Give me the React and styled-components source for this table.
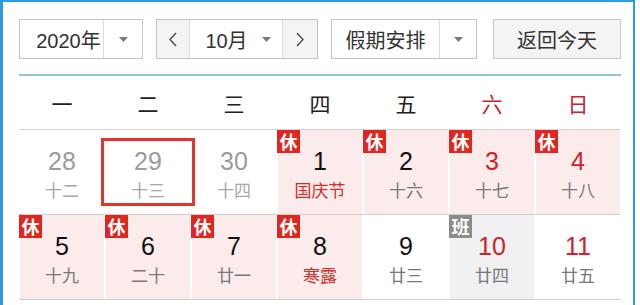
import React from "react"
import styled, { createGlobalStyle } from "styled-components"

const weekdays = ["一", "二", "三", "四", "五", "六", "日"]

const weeks = [
  [
    { day: 28, sub: "十二", other: true },
    { day: 29, sub: "十三", other: true, selected: true },
    { day: 30, sub: "十四", other: true },
    { day: 1, sub: "国庆节", tag: "rest", festival: true },
    { day: 2, sub: "十六", tag: "rest" },
    { day: 3, sub: "十七", tag: "rest" },
    { day: 4, sub: "十八", tag: "rest" },
  ],
  [
    { day: 5, sub: "十九", tag: "rest" },
    { day: 6, sub: "二十", tag: "rest" },
    { day: 7, sub: "廿一", tag: "rest" },
    { day: 8, sub: "寒露", tag: "rest", festival: true },
    { day: 9, sub: "廿三" },
    { day: 10, sub: "廿四", tag: "work" },
    { day: 11, sub: "廿五" },
  ],
]

function Arrow() {
  return (
    <svg width="9" height="5" viewBox="0 0 9 5">
      <polygon points="0,0 9,0 4.5,5" fill="#7a7a7a" />
    </svg>
  )
}

function Chevron({ dir }) {
  const pts = dir === "left" ? "8,1 2,7.5 8,14" : "2,1 8,7.5 2,14"
  return (
    <svg width="10" height="15" viewBox="0 0 10 15">
      <polyline points={pts} fill="none" stroke="#444" strokeWidth="1.3" />
    </svg>
  )
}

function App() {
  return (
    <>
      <GlobalStyle />
      <Frame>
        <Toolbar>
          <SelectBox $width={124}>
            <SelectLabel $pad={14}>2020年</SelectLabel>
            <ArrowPart $width={38}>
              <Arrow />
            </ArrowPart>
          </SelectBox>
          <MonthGroup>
            <NavButton $side="left">
              <Chevron dir="left" />
            </NavButton>
            <MonthPart>
              <span>10月</span>
              <Arrow />
            </MonthPart>
            <NavButton $side="right">
              <Chevron dir="right" />
            </NavButton>
          </MonthGroup>
          <SelectBox $width={146}>
            <SelectLabel $pad={0}>假期安排</SelectLabel>
            <ArrowPart $width={36}>
              <Arrow />
            </ArrowPart>
          </SelectBox>
          <TodayButton>返回今天</TodayButton>
        </Toolbar>
        <Divider />
        <WeekHeader>
          {weekdays.map((w, i) => (
            <WeekName key={w} $weekend={i > 4}>
              {w}
            </WeekName>
          ))}
        </WeekHeader>
        {weeks.map((week, r) => (
          <Week key={r}>
            {week.map((d, i) => (
              <Cell key={d.day} $tag={d.tag}>
                {d.tag === "rest" && <Badge>休</Badge>}
                {d.tag === "work" && <Badge $work>班</Badge>}
                <Num $other={d.other} $weekend={i > 4}>
                  {d.day}
                </Num>
                <Lunar $other={d.other} $festival={d.festival}>
                  {d.sub}
                </Lunar>
                {d.selected && <Selected />}
              </Cell>
            ))}
          </Week>
        ))}
      </Frame>
    </>
  )
}

export default App

const GlobalStyle = createGlobalStyle`
  body {
    margin: 0;
    background: #fff;
    font-family: "Liberation Sans", "Noto Sans CJK SC", sans-serif;
  }
`
const Frame = styled.div`
  width: 635px;
  height: 305px;
  box-sizing: border-box;
  border-top: 2px solid #3398e4;
  border-left: 3px solid #3398e4;
  border-right: 2px solid #3398e4;
  padding: 17px 12px 0 16px;
  overflow: hidden;
  background: #fff;
`
const Toolbar = styled.div`
  display: flex;
  height: 40px;
  gap: 13px;
`
const SelectBox = styled.div`
  display: flex;
  box-sizing: border-box;
  width: ${(p) => p.$width}px;
  border: 1px solid #c4c4c4;
  background: #fff;
`
const SelectLabel = styled.div`
  flex: 1;
  display: flex;
  align-items: center;
  justify-content: center;
  padding-left: ${(p) => p.$pad}px;
  font-size: 20px;
  color: #333;
`
const ArrowPart = styled.div`
  width: ${(p) => p.$width}px;
  display: flex;
  align-items: center;
  justify-content: center;
  border-left: 1px solid #dcdcdc;
`
const MonthGroup = styled.div`
  display: flex;
  box-sizing: border-box;
  width: 162px;
  border: 1px solid #c4c4c4;
  background: #fff;
`
const NavButton = styled.div`
  width: ${(p) => (p.$side === "left" ? 32 : 34)}px;
  display: flex;
  align-items: center;
  justify-content: center;
  background: #f4f4f4;
  border-${(p) => (p.$side === "left" ? "right" : "left")}: 1px solid #dcdcdc;
`
const MonthPart = styled.div`
  flex: 1;
  display: flex;
  align-items: center;
  justify-content: center;
  gap: 14px;
  padding-left: 4px;
  font-size: 20px;
  color: #333;
`
const TodayButton = styled.div`
  margin-left: 3px;
  width: 128px;
  box-sizing: border-box;
  display: flex;
  align-items: center;
  justify-content: center;
  border: 1px solid #c8c8c8;
  background: #f4f4f4;
  font-size: 20px;
  color: #333;
`
const Divider = styled.div`
  margin-top: 15px;
  height: 2px;
  background: #93c5d6;
`
const WeekHeader = styled.div`
  display: grid;
  grid-template-columns: repeat(7, 1fr);
  height: 53px;
  border-bottom: 1px solid #d4d4d4;
  align-items: center;
`
const WeekName = styled.div`
  text-align: center;
  font-size: 21px;
  color: ${(p) => (p.$weekend ? "#c4262c" : "#222")};
`
const Week = styled.div`
  display: grid;
  grid-template-columns: repeat(7, 1fr);
  height: 85px;
  box-sizing: border-box;
  border-bottom: 1px solid #cfcfcf;
`
const Cell = styled.div`
  position: relative;
  display: flex;
  flex-direction: column;
  align-items: center;
  padding-top: 17px;
  border-left: 1px solid #fff;
  border-right: 1px solid #fff;
  background-color: ${(p) =>
    p.$tag === "rest" ? "#fbebeb" : p.$tag === "work" ? "#f1f1f3" : "#fff"};
`
const Badge = styled.div`
  position: absolute;
  top: 0;
  left: -1px;
  width: 23px;
  height: 23px;
  line-height: 23px;
  text-align: center;
  font-size: 18px;
  font-weight: bold;
  font-family: "Noto Sans CJK SC", sans-serif;
  color: #fff;
  background: ${(p) => (p.$work ? "#8c8c8c" : "#e1261f")};
`
const Num = styled.div`
  font-size: 25px;
  line-height: 28px;
  color: ${(p) => (p.$other ? "#9c9c9c" : p.$weekend ? "#d0222a" : "#111")};
`
const Lunar = styled.div`
  margin-top: 5px;
  font-size: 17px;
  line-height: 20px;
  font-family: "Noto Sans CJK SC", sans-serif;
  color: ${(p) => (p.$festival ? "#d4302b" : p.$other ? "#a8a8a8" : "#787878")};
`
const Selected = styled.div`
  position: absolute;
  z-index: 1;
  top: 8px;
  bottom: 8px;
  left: -5px;
  right: -5px;
  border: 3px solid #e2352c;
`
